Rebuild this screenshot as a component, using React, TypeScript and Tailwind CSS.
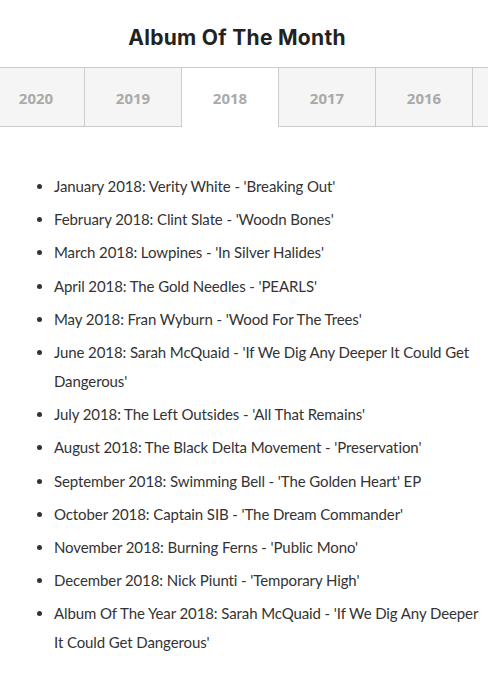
import React from "react";

const items: string[] = [
  "January 2018: Verity White - 'Breaking Out'",
  "February 2018: Clint Slate - 'Woodn Bones'",
  "March 2018: Lowpines - 'In Silver Halides'",
  "April 2018: The Gold Needles - 'PEARLS'",
  "May 2018: Fran Wyburn - 'Wood For The Trees'",
  "June 2018: Sarah McQuaid - 'If We Dig Any Deeper It Could Get Dangerous'",
  "July 2018: The Left Outsides - 'All That Remains'",
  "August 2018: The Black Delta Movement - 'Preservation'",
  "September 2018: Swimming Bell - 'The Golden Heart' EP",
  "October 2018: Captain SIB - 'The Dream Commander'",
  "November 2018: Burning Ferns - 'Public Mono'",
  "December 2018: Nick Piunti - 'Temporary High'",
  "Album Of The Year 2018: Sarah McQuaid - 'If We Dig Any Deeper It Could Get Dangerous'",
];

const years = ["2020", "2019", "2018", "2017", "2016", ""];

export default function App() {
  return (
    <div className="w-[488px] h-[688px] bg-white overflow-hidden" style={{ fontFamily: "Lato, 'Liberation Sans', sans-serif" }}>
      <h1 className="pt-[22px] pr-[14px] h-[67px] text-center text-[21px] font-bold text-[#222] tracking-[0.3px]" style={{ fontFamily: "Inter, 'Noto Sans', sans-serif" }}>
        Album Of The Month
      </h1>
      <div className="flex ml-[-13px] h-[60px]">
        {years.map((y, i) => {
          const active = y === "2018";
          return (
            <div
              key={i}
              className={
                active
                  ? "w-[97px] shrink-0 flex items-center justify-center pt-[2px] bg-white border-t border-l border-[#ccc] text-[15px] font-bold text-[#aaa]"
                  : "w-[97px] shrink-0 flex items-center justify-center pt-[2px] bg-[#f5f5f5] border-t border-l border-b border-[#ccc] text-[15px] font-bold text-[#aaa]"
              }
              style={{ fontFamily: "'Open Sans', sans-serif" }}
            >
              {y}
            </div>
          );
        })}
      </div>
      <ul className="list-disc pl-[54px] pr-[10px] pt-[45px] text-[15px] leading-[29px] tracking-[-0.1px] text-[#333]">
        {items.map((t, i) => (
          <li key={i} className="mb-[4.2px] marker:text-[#333]">
            {t}
          </li>
        ))}
      </ul>
    </div>
  );
}
